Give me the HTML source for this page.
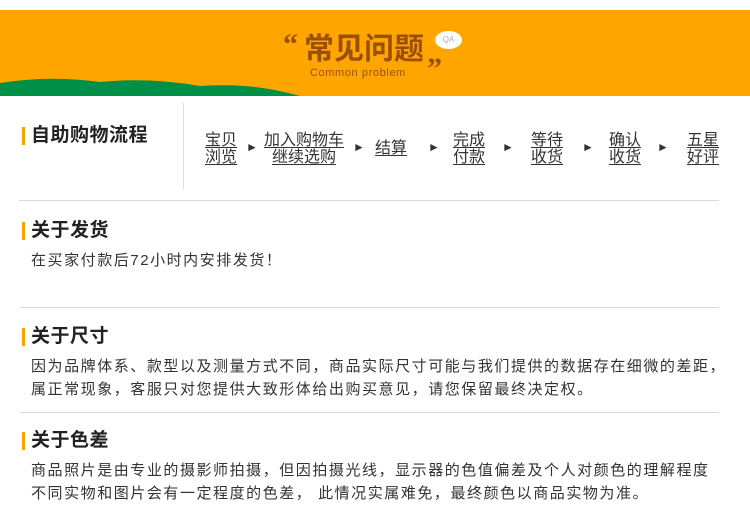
<!DOCTYPE html>
<html><head><meta charset="utf-8"><style>
*{margin:0;padding:0}
body{width:750px;height:509px;background:#fff;position:relative;overflow:hidden;font-family:"Liberation Sans","Noto Sans CJK SC",sans-serif;color:#333}
.a{position:absolute;white-space:nowrap}
.hl{position:absolute;left:19px;width:700px;height:1px;background:#d9d9d9}
.bar{position:absolute;left:22px;width:3px;height:18px;background:#f9a400}
.h{position:absolute;left:31px;font-size:19px;font-weight:bold;color:#222;line-height:20px;letter-spacing:0.5px}
.t{position:absolute;left:31px;font-size:15px;line-height:23px;color:#333;white-space:nowrap;letter-spacing:1.55px}
.st{position:absolute;font-size:16px;line-height:17px;color:#333;text-align:center;text-decoration:underline;text-underline-offset:2px}
.ar{position:absolute;font-size:12px;color:#333}
</style></head><body>
<div class="a" style="left:0;top:10px;width:750px;height:86px;background:#fea500;overflow:hidden">
<svg width="750" height="86" style="position:absolute;left:0;top:0">
<path d="M0 86 L0 73 Q50 65 100 72 Q150 67 200 76 Q250 72 300 86 Z" fill="#008f47"/>
</svg>
<div class="a" style="left:283px;top:18px;font-size:30px;font-weight:bold;color:#9a4f06;font-family:'Liberation Serif',serif">“</div>
<div class="a" style="left:304px;top:23px;font-size:30px;font-weight:bold;color:#9a4f06;line-height:34px">常见问题</div>
<div class="a" style="left:310px;top:57px;font-size:11px;color:#9a4f06;letter-spacing:0.6px">Common problem</div>
<div class="a" style="left:427px;top:42px;font-size:30px;font-weight:bold;color:#9a4f06;font-family:'Liberation Serif',serif">”</div>
<div class="a" style="left:435px;top:21px;width:27px;height:18px;border-radius:50%;background:#fff;font-size:8px;color:#aaa;text-align:center;line-height:18px">QA</div>
</div>
<div class="bar" style="top:127px"></div>
<div class="h" style="top:126px">自助购物流程</div>
<div class="a" style="left:183px;top:103px;width:1px;height:86px;background:#ddd"></div>
<div class="st" style="left:205px;top:132px">宝贝<br>浏览</div>
<div class="ar" style="left:246px;top:140px">►</div>
<div class="st" style="left:264px;top:132px">加入购物车<br>继续选购</div>
<div class="ar" style="left:353px;top:140px">►</div>
<div class="st" style="left:375px;top:140px">结算</div>
<div class="ar" style="left:428px;top:140px">►</div>
<div class="st" style="left:453px;top:132px">完成<br>付款</div>
<div class="ar" style="left:502px;top:140px">►</div>
<div class="st" style="left:531px;top:132px">等待<br>收货</div>
<div class="ar" style="left:582px;top:140px">►</div>
<div class="st" style="left:609px;top:132px">确认<br>收货</div>
<div class="ar" style="left:657px;top:140px">►</div>
<div class="st" style="left:687px;top:132px">五星<br>好评</div>
<div class="hl" style="top:200px"></div>
<div class="bar" style="top:222px"></div>
<div class="h" style="top:221px">关于发货</div>
<div class="t" style="top:249px">在买家付款后72小时内安排发货！</div>
<div class="hl" style="top:307px"></div>
<div class="bar" style="top:328px"></div>
<div class="h" style="top:327px">关于尺寸</div>
<div class="t" style="top:355px">因为品牌体系、款型以及测量方式不同，商品实际尺寸可能与我们提供的数据存在细微的差距，<br>属正常现象，客服只对您提供大致形体给出购买意见，请您保留最终决定权。</div>
<div class="hl" style="top:412px"></div>
<div class="bar" style="top:432px"></div>
<div class="h" style="top:431px">关于色差</div>
<div class="t" style="top:459px">商品照片是由专业的摄影师拍摄，但因拍摄光线，显示器的色值偏差及个人对颜色的理解程度<br>不同实物和图片会有一定程度的色差， 此情况实属难免，最终颜色以商品实物为准。</div>
</body></html>
